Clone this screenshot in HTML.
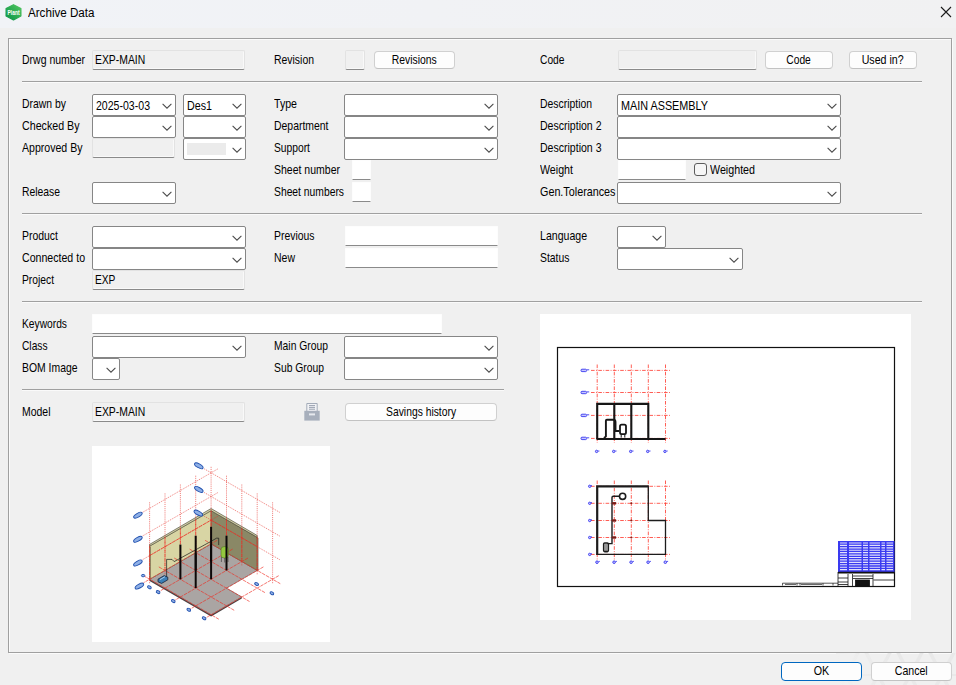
<!DOCTYPE html>
<html><head><meta charset="utf-8"><title>Archive Data</title>
<style>
*{box-sizing:border-box;margin:0;padding:0}
html,body{width:956px;height:685px;overflow:hidden;background:#f0f0f0}
body{position:relative;font-family:"Liberation Sans",sans-serif;font-size:13px;color:#000;line-height:15px}
body>div,body>svg{position:absolute}
#tb{left:0;top:0;width:956px;height:28px;background:linear-gradient(90deg,#f1f3f7,#f1f2f5 45%,#f1f1f2)}
#ttl{left:28px;top:6px;font-size:12px;line-height:15px;white-space:nowrap}
#ttl span{display:inline-block;transform:scaleX(.968);transform-origin:0 50%}
#fr{left:8px;top:38px;width:944px;height:615px;border:1px solid #a0a0a0;box-shadow:inset 1px 1px 0 #fbfbfb,1px 1px 0 #fbfbfb}
.l{white-space:nowrap;height:15px}
.l span,.ct span,.ft span{display:inline-block;transform:scaleX(0.803);transform-origin:0 50%;white-space:nowrap}
.cb{background:#fff;border:1px solid #868686;border-radius:2px}
.cb .ct{position:absolute;left:3px;top:3px;height:15px}
.cb .chev{position:absolute;right:3px;top:8px}
.cb .dis{position:absolute;left:3px;top:4px;right:19px;bottom:4px;background:#ebebeb}
.fd{background:#f0f0f0;border:1px solid #e2e2e2;border-bottom-color:#8a8a8a;border-radius:2px;box-shadow:inset -1px -1px 0 #f9f9f9}
.fd.w{background:#fff;border-radius:1px;border-color:#fdfdfd;border-bottom-color:#8a8a8a;box-shadow:none}
.fd .ft{position:absolute;left:2px;top:1px;height:15px}
.bt{background:#fdfdfd;border:1px solid #d0d0d0;border-bottom-color:#c2c2c2;border-radius:4px;text-align:center;white-space:nowrap;line-height:16px}
.bt span{display:inline-block;transform:scaleX(0.803);transform-origin:50% 50%}
.bt.def{border:1.5px solid #0067c0;line-height:15px}
.sp{height:2px;border-top:1px solid #a0a0a0;border-bottom:1px solid #fafafa}
.ck{width:13px;height:13px;border:1px solid #5c5c5c;border-radius:3px;background:#f6f6f6}
.pv{background:#fff;overflow:hidden}
.pv svg{position:absolute;left:0;top:0}
</style></head>
<body>
<div id="tb"></div>
<svg id="ico" width="19" height="19" viewBox="0 0 18 18" style="left:4.1px;top:2.8px">
<defs><linearGradient id="g" x1="1" y1="0" x2="0" y2="1"><stop offset="0" stop-color="#52c660"/><stop offset="1" stop-color="#0a9346"/></linearGradient></defs>
<path d="M9 1.6 L16 5.3 L16 12.3 L9 16 L2 12.3 L2 5.3 Z" fill="url(#g)" stroke="url(#g)" stroke-width="1.2" stroke-linejoin="round"/>
<text transform="translate(9.1 11.3) scale(1 1.4)" x="0" y="0" font-family="Liberation Sans, sans-serif" font-weight="bold" font-size="4.7" fill="#fff" text-anchor="middle">Plant</text></svg>
<div id="ttl"><span>Archive Data</span></div>
<svg id="cls" width="12" height="12" viewBox="0 0 12 12" style="left:940px;top:6px"><path d="M1 1 L11 11 M11 1 L1 11" stroke="#1a1a1a" stroke-width="1.1" fill="none"/></svg>
<div id="fr"></div>
<div class="l " style="left:22px;top:52.0px"><span style="transform:scaleX(0.807)">Drwg number</span></div>
<div class="fd" style="left:92px;top:50px;width:153px;height:20px"><span class="ft"><span style="transform:scaleX(0.800)">EXP-MAIN</span></span></div>
<div class="l " style="left:274px;top:52.0px"><span style="transform:scaleX(0.802)">Revision</span></div>
<div class="fd" style="left:345px;top:50px;width:20px;height:20px"></div>
<div class="bt " style="left:374px;top:51px;width:81px;height:18px"><span style="transform:scaleX(0.798)">Revisions</span></div>
<div class="l " style="left:540px;top:52.0px"><span style="transform:scaleX(0.788)">Code</span></div>
<div class="fd" style="left:618px;top:50px;width:139px;height:20px"></div>
<div class="bt " style="left:765px;top:51px;width:68px;height:18px"><span style="transform:scaleX(0.788)">Code</span></div>
<div class="bt " style="left:849px;top:51px;width:68px;height:18px"><span style="transform:scaleX(0.819)">Used in?</span></div>
<div class="sp" style="left:22px;top:81px;width:900px"></div>
<div class="l " style="left:22px;top:95.6px"><span style="transform:scaleX(0.801)">Drawn by</span></div>
<div class="cb" style="left:92px;top:94px;width:84px;height:22px"><span class="ct"><span style="transform:scaleX(0.812)">2025-03-03</span></span><svg class="chev" width="10" height="6" viewBox="0 0 10 6"><path d="M0.6 0.8 L5 5.2 L9.4 0.8" fill="none" stroke="#4a4a4a" stroke-width="1.05"/></svg></div>
<div class="cb" style="left:183px;top:94px;width:63px;height:22px"><span class="ct"><span style="transform:scaleX(0.823)">Des1</span></span><svg class="chev" width="10" height="6" viewBox="0 0 10 6"><path d="M0.6 0.8 L5 5.2 L9.4 0.8" fill="none" stroke="#4a4a4a" stroke-width="1.05"/></svg></div>
<div class="l " style="left:22px;top:117.6px"><span style="transform:scaleX(0.820)">Checked By</span></div>
<div class="cb" style="left:92px;top:116px;width:84px;height:22px"><svg class="chev" width="10" height="6" viewBox="0 0 10 6"><path d="M0.6 0.8 L5 5.2 L9.4 0.8" fill="none" stroke="#4a4a4a" stroke-width="1.05"/></svg></div>
<div class="cb" style="left:183px;top:116px;width:63px;height:22px"><svg class="chev" width="10" height="6" viewBox="0 0 10 6"><path d="M0.6 0.8 L5 5.2 L9.4 0.8" fill="none" stroke="#4a4a4a" stroke-width="1.05"/></svg></div>
<div class="l " style="left:22px;top:139.6px"><span style="transform:scaleX(0.813)">Approved By</span></div>
<div class="fd" style="left:92px;top:138px;width:83px;height:20px"></div>
<div class="cb" style="left:183px;top:138px;width:63px;height:22px"><i class="dis"></i><svg class="chev" width="10" height="6" viewBox="0 0 10 6"><path d="M0.6 0.8 L5 5.2 L9.4 0.8" fill="none" stroke="#4a4a4a" stroke-width="1.05"/></svg></div>
<div class="l " style="left:22px;top:183.6px"><span style="transform:scaleX(0.797)">Release</span></div>
<div class="cb" style="left:92px;top:182px;width:84px;height:22px"><svg class="chev" width="10" height="6" viewBox="0 0 10 6"><path d="M0.6 0.8 L5 5.2 L9.4 0.8" fill="none" stroke="#4a4a4a" stroke-width="1.05"/></svg></div>
<div class="l " style="left:274px;top:95.6px"><span style="transform:scaleX(0.816)">Type</span></div>
<div class="cb" style="left:344px;top:94px;width:154px;height:22px"><svg class="chev" width="10" height="6" viewBox="0 0 10 6"><path d="M0.6 0.8 L5 5.2 L9.4 0.8" fill="none" stroke="#4a4a4a" stroke-width="1.05"/></svg></div>
<div class="l " style="left:274px;top:117.6px"><span style="transform:scaleX(0.802)">Department</span></div>
<div class="cb" style="left:344px;top:116px;width:154px;height:22px"><svg class="chev" width="10" height="6" viewBox="0 0 10 6"><path d="M0.6 0.8 L5 5.2 L9.4 0.8" fill="none" stroke="#4a4a4a" stroke-width="1.05"/></svg></div>
<div class="l " style="left:274px;top:139.6px"><span style="transform:scaleX(0.790)">Support</span></div>
<div class="cb" style="left:344px;top:138px;width:154px;height:22px"><svg class="chev" width="10" height="6" viewBox="0 0 10 6"><path d="M0.6 0.8 L5 5.2 L9.4 0.8" fill="none" stroke="#4a4a4a" stroke-width="1.05"/></svg></div>
<div class="l " style="left:274px;top:161.6px"><span style="transform:scaleX(0.808)">Sheet number</span></div>
<div class="fd w" style="left:352px;top:160px;width:19px;height:20px"></div>
<div class="l " style="left:274px;top:183.6px"><span style="transform:scaleX(0.794)">Sheet numbers</span></div>
<div class="fd w" style="left:352px;top:182px;width:19px;height:20px"></div>
<div class="l " style="left:540px;top:95.6px"><span style="transform:scaleX(0.800)">Description</span></div>
<div class="cb" style="left:617px;top:94px;width:224px;height:22px"><span class="ct"><span style="transform:scaleX(0.832)">MAIN ASSEMBLY</span></span><svg class="chev" width="10" height="6" viewBox="0 0 10 6"><path d="M0.6 0.8 L5 5.2 L9.4 0.8" fill="none" stroke="#4a4a4a" stroke-width="1.05"/></svg></div>
<div class="l " style="left:540px;top:117.6px"><span style="transform:scaleX(0.811)">Description 2</span></div>
<div class="cb" style="left:617px;top:116px;width:224px;height:22px"><svg class="chev" width="10" height="6" viewBox="0 0 10 6"><path d="M0.6 0.8 L5 5.2 L9.4 0.8" fill="none" stroke="#4a4a4a" stroke-width="1.05"/></svg></div>
<div class="l " style="left:540px;top:139.6px"><span style="transform:scaleX(0.811)">Description 3</span></div>
<div class="cb" style="left:617px;top:138px;width:224px;height:22px"><svg class="chev" width="10" height="6" viewBox="0 0 10 6"><path d="M0.6 0.8 L5 5.2 L9.4 0.8" fill="none" stroke="#4a4a4a" stroke-width="1.05"/></svg></div>
<div class="l " style="left:540px;top:161.6px"><span style="transform:scaleX(0.820)">Weight</span></div>
<div class="fd w" style="left:618px;top:160px;width:68px;height:20px"></div>
<div class="ck" style="left:694px;top:163px"></div>
<div class="l " style="left:710px;top:161.6px"><span style="transform:scaleX(0.823)">Weighted</span></div>
<div class="l " style="left:540px;top:183.6px"><span style="transform:scaleX(0.829)">Gen.Tolerances</span></div>
<div class="cb" style="left:617px;top:182px;width:224px;height:22px"><svg class="chev" width="10" height="6" viewBox="0 0 10 6"><path d="M0.6 0.8 L5 5.2 L9.4 0.8" fill="none" stroke="#4a4a4a" stroke-width="1.05"/></svg></div>
<div class="sp" style="left:22px;top:213px;width:900px"></div>
<div class="l " style="left:22px;top:227.6px"><span style="transform:scaleX(0.803)">Product</span></div>
<div class="cb" style="left:92px;top:226px;width:154px;height:22px"><svg class="chev" width="10" height="6" viewBox="0 0 10 6"><path d="M0.6 0.8 L5 5.2 L9.4 0.8" fill="none" stroke="#4a4a4a" stroke-width="1.05"/></svg></div>
<div class="l " style="left:22px;top:249.6px"><span style="transform:scaleX(0.815)">Connected to</span></div>
<div class="cb" style="left:92px;top:248px;width:154px;height:22px"><svg class="chev" width="10" height="6" viewBox="0 0 10 6"><path d="M0.6 0.8 L5 5.2 L9.4 0.8" fill="none" stroke="#4a4a4a" stroke-width="1.05"/></svg></div>
<div class="l " style="left:22px;top:271.6px"><span style="transform:scaleX(0.791)">Project</span></div>
<div class="fd" style="left:92px;top:270px;width:153px;height:20px"><span class="ft"><span style="transform:scaleX(0.785)">EXP</span></span></div>
<div class="l " style="left:274px;top:227.6px"><span style="transform:scaleX(0.801)">Previous</span></div>
<div class="fd w" style="left:345px;top:226px;width:153px;height:20px"></div>
<div class="l " style="left:274px;top:249.6px"><span style="transform:scaleX(0.807)">New</span></div>
<div class="fd w" style="left:345px;top:248px;width:153px;height:20px"></div>
<div class="l " style="left:540px;top:227.6px"><span style="transform:scaleX(0.813)">Language</span></div>
<div class="cb" style="left:617px;top:226px;width:49px;height:22px"><svg class="chev" width="10" height="6" viewBox="0 0 10 6"><path d="M0.6 0.8 L5 5.2 L9.4 0.8" fill="none" stroke="#4a4a4a" stroke-width="1.05"/></svg></div>
<div class="l " style="left:540px;top:249.6px"><span style="transform:scaleX(0.800)">Status</span></div>
<div class="cb" style="left:617px;top:248px;width:126px;height:22px"><svg class="chev" width="10" height="6" viewBox="0 0 10 6"><path d="M0.6 0.8 L5 5.2 L9.4 0.8" fill="none" stroke="#4a4a4a" stroke-width="1.05"/></svg></div>
<div class="sp" style="left:22px;top:301px;width:900px"></div>
<div class="l " style="left:22px;top:315.6px"><span style="transform:scaleX(0.788)">Keywords</span></div>
<div class="fd w" style="left:92px;top:314px;width:350px;height:20px"></div>
<div class="l " style="left:22px;top:337.6px"><span style="transform:scaleX(0.785)">Class</span></div>
<div class="cb" style="left:92px;top:336px;width:154px;height:22px"><svg class="chev" width="10" height="6" viewBox="0 0 10 6"><path d="M0.6 0.8 L5 5.2 L9.4 0.8" fill="none" stroke="#4a4a4a" stroke-width="1.05"/></svg></div>
<div class="l " style="left:22px;top:359.6px"><span style="transform:scaleX(0.800)">BOM Image</span></div>
<div class="cb" style="left:92px;top:358px;width:28px;height:22px"><svg class="chev" width="10" height="6" viewBox="0 0 10 6"><path d="M0.6 0.8 L5 5.2 L9.4 0.8" fill="none" stroke="#4a4a4a" stroke-width="1.05"/></svg></div>
<div class="l " style="left:274px;top:337.6px"><span style="transform:scaleX(0.795)">Main Group</span></div>
<div class="cb" style="left:344px;top:336px;width:154px;height:22px"><svg class="chev" width="10" height="6" viewBox="0 0 10 6"><path d="M0.6 0.8 L5 5.2 L9.4 0.8" fill="none" stroke="#4a4a4a" stroke-width="1.05"/></svg></div>
<div class="l " style="left:274px;top:359.6px"><span style="transform:scaleX(0.795)">Sub Group</span></div>
<div class="cb" style="left:344px;top:358px;width:154px;height:22px"><svg class="chev" width="10" height="6" viewBox="0 0 10 6"><path d="M0.6 0.8 L5 5.2 L9.4 0.8" fill="none" stroke="#4a4a4a" stroke-width="1.05"/></svg></div>
<div class="sp" style="left:22px;top:389px;width:482px"></div>
<div class="l " style="left:22px;top:403.6px"><span style="transform:scaleX(0.805)">Model</span></div>
<div class="fd" style="left:92px;top:402px;width:153px;height:20px"><span class="ft"><span style="transform:scaleX(0.800)">EXP-MAIN</span></span></div>
<svg id="prn" width="16" height="18" viewBox="0 0 16 18" style="left:304px;top:403px">
<path d="M2.8 0.5 H13.2 V9 H2.8 Z" fill="#f1f2f5" stroke="#a3abb8" stroke-width="1"/>
<path d="M5 2.6 H11 M5 4.4 H11 M5 6.2 H11" stroke="#9aa2b0" stroke-width="1"/>
<path d="M0.3 7.8 H15.7 V17.6 H0.3 Z" fill="#a7afbc"/>
<rect x="5" y="10.4" width="6" height="2" fill="#e6e9ee"/></svg>
<div class="bt " style="left:345px;top:403px;width:152px;height:18px"><span style="transform:scaleX(0.794)">Savings history</span></div>
<div class="pv" style="left:92px;top:446px;width:238px;height:196px">
<svg width="238" height="196" viewBox="92 446 238 196">
<polygon points="149.6,579.3 211.1,614.8 241.8,597.0 241.8,598.6 211.1,616.4 149.6,580.9" fill="#4a4444"/>
<polygon points="211.1,543.8 257.2,570.4 226.5,588.1 241.8,597.0 211.1,614.8 149.6,579.3" fill="#aaa5a3" stroke="#5a5454" stroke-width="0.5"/>
<polygon points="211.1,543.8 149.6,579.3 149.6,546.2 211.1,510.7" fill="#d8d5a4" stroke="#6a684c" stroke-width="0.5"/>
<polygon points="211.1,543.8 257.2,570.4 257.2,537.3 211.1,510.7" fill="#8a8866" stroke="#55543c" stroke-width="0.5"/>
<polygon points="149.6,546.2 211.1,510.7 257.2,537.3 257.2,535.5 211.1,508.5 149.6,544.4" fill="#d2d0a8" stroke="#3a3928" stroke-width="0.6"/>
<polygon points="257.2,570.4 257.2,537.3 258.4,538.0 258.4,571.1" fill="#6d6b50"/>
<polygon points="149.6,579.3 149.6,546.2 150.8,546.9 150.8,580.0" fill="#7d7b5c"/>
<g stroke="#e8302a" stroke-width="0.7" fill="none" stroke-dasharray="1.1 1" opacity="0.85">
<path d="M211.1 466.8 V547.8"/>
<path d="M195.7 475.7 V556.7"/>
<path d="M180.4 484.5 V565.5"/>
<path d="M165.0 493.4 V574.4"/>
<path d="M149.6 502.3 V583.3"/>
<path d="M226.5 475.7 V556.7"/>
<path d="M241.8 484.5 V565.5"/>
<path d="M257.2 493.4 V574.4"/>
<path d="M272.6 502.3 V583.3"/>
<path d="M142.7 559.6 L218.0 516.1"/>
<path d="M204.2 516.1 L280.3 560.0"/>
<path d="M142.7 535.9 L218.0 492.5"/>
<path d="M204.2 492.5 L280.3 536.4"/>
<path d="M142.7 512.3 L218.0 468.8"/>
<path d="M204.2 468.8 L280.3 512.7"/>
</g>
<g stroke="#f02a20" stroke-width="0.7" fill="none" opacity="0.9" stroke-dasharray="3.5 0.9">
<path d="M217.2 540.3 L143.5 582.8"/>
<path d="M232.6 549.1 L158.8 591.7"/>
<path d="M248.0 558.0 L174.2 600.6"/>
<path d="M263.4 566.9 L189.6 609.4"/>
<path d="M278.7 575.7 L205.0 618.3"/>
<path d="M205.0 540.3 L280.3 583.7"/>
<path d="M189.6 549.1 L264.9 592.6"/>
<path d="M174.2 558.0 L249.5 601.5"/>
<path d="M158.8 566.9 L234.2 610.3"/>
<path d="M143.5 575.7 L218.8 619.2"/>
<path d="M149.6 555.6 L211.1 520.1 L257.2 546.7"/>
<path d="M211.1 543.8 V510.7"/>
<path d="M195.7 552.7 V519.6"/>
<path d="M180.4 561.5 V528.4"/>
<path d="M165.0 570.4 V537.3"/>
<path d="M149.6 579.3 V546.2"/>
<path d="M226.5 552.7 V519.6"/>
<path d="M241.8 561.5 V528.4"/>
<path d="M257.2 570.4 V537.3"/>
</g>
<g stroke="#1a1a1a" stroke-width="0.7" fill="none">
<path d="M166.6 577 V559.4 H172 L174.2 561.6 L210 541.9 L216.5 538.2 H218.7 V545"/>
</g>
<path d="M158 579.2 l6.2 -3.6 l3.6 1.6 v2.6 l-6.2 3.6 l-3.6 -1.6z" fill="#3b7fb6" stroke="#16233a" stroke-width="0.8"/>
<path d="M160 579.6 l5 -2.9" stroke="#bfe0ff" stroke-width="0.8"/>
<rect x="221" y="546.6" width="7.4" height="11.4" rx="3" fill="#93c83f" stroke="#46651f" stroke-width="0.5"/>
<path d="M221.4 557 v5 M228 557 v5 M224.7 558 v4.5" stroke="#333" stroke-width="0.6"/>
<g stroke="#0c0808" stroke-width="2">
<path d="M211.1 561.5 V526.8"/>
<path d="M195.7 570.4 V535.7"/>
<path d="M180.4 579.3 V544.6"/>
<path d="M226.5 570.4 V535.7"/>
<path d="M211.1 579.3 V544.6"/>
<path d="M195.7 588.1 V553.4"/>
</g>
<ellipse cx="137.9" cy="515.2" rx="4.8" ry="1.9" transform="rotate(-30 137.9 515.2)" fill="#8fb0e6" stroke="#1f4fae" stroke-width="0.9"/>
<ellipse cx="137.9" cy="539.3" rx="4.8" ry="1.9" transform="rotate(-30 137.9 539.3)" fill="#8fb0e6" stroke="#1f4fae" stroke-width="0.9"/>
<ellipse cx="137.9" cy="563.0" rx="4.8" ry="1.9" transform="rotate(-30 137.9 563.0)" fill="#8fb0e6" stroke="#1f4fae" stroke-width="0.9"/>
<ellipse cx="139.4" cy="586.1" rx="4.8" ry="1.9" transform="rotate(-30 139.4 586.1)" fill="#8fb0e6" stroke="#1f4fae" stroke-width="0.9"/>
<ellipse cx="198.8" cy="465.8" rx="4.8" ry="1.9" transform="rotate(30 198.8 465.8)" fill="#8fb0e6" stroke="#1f4fae" stroke-width="0.9"/>
<ellipse cx="198.8" cy="489.4" rx="4.8" ry="1.9" transform="rotate(30 198.8 489.4)" fill="#8fb0e6" stroke="#1f4fae" stroke-width="0.9"/>
<ellipse cx="198.3" cy="513.1" rx="4.8" ry="1.9" transform="rotate(30 198.3 513.1)" fill="#8fb0e6" stroke="#1f4fae" stroke-width="0.9"/>
<ellipse cx="149.4" cy="587.2" rx="2.0" ry="1.3" transform="rotate(30 149.4 587.2)" fill="#8fb0e6" stroke="#1f4fae" stroke-width="0.9"/>
<ellipse cx="158.1" cy="592.1" rx="2.0" ry="1.3" transform="rotate(30 158.1 592.1)" fill="#8fb0e6" stroke="#1f4fae" stroke-width="0.9"/>
<ellipse cx="173.3" cy="601.1" rx="2.0" ry="1.3" transform="rotate(30 173.3 601.1)" fill="#8fb0e6" stroke="#1f4fae" stroke-width="0.9"/>
<ellipse cx="188.8" cy="609.7" rx="2.0" ry="1.3" transform="rotate(30 188.8 609.7)" fill="#8fb0e6" stroke="#1f4fae" stroke-width="0.9"/>
<ellipse cx="204.1" cy="618.2" rx="2.0" ry="1.3" transform="rotate(30 204.1 618.2)" fill="#8fb0e6" stroke="#1f4fae" stroke-width="0.9"/>
<ellipse cx="256.6" cy="584.0" rx="2.0" ry="1.3" transform="rotate(30 256.6 584.0)" fill="#8fb0e6" stroke="#1f4fae" stroke-width="0.9"/>
<ellipse cx="271.9" cy="593.2" rx="2.0" ry="1.3" transform="rotate(30 271.9 593.2)" fill="#8fb0e6" stroke="#1f4fae" stroke-width="0.9"/>
<ellipse cx="143.1" cy="575.6" rx="1.7" ry="1.2" transform="rotate(0 143.1 575.6)" fill="#8fb0e6" stroke="#1f4fae" stroke-width="0.9"/>
</svg>
</div>
<div class="pv" style="left:540px;top:314px;width:371px;height:306px">
<svg width="371" height="306" viewBox="0 0 371 306">
<rect x="17.5" y="33.5" width="337" height="239" fill="none" stroke="#111" stroke-width="1.2"/>
<g stroke="#ff4136" stroke-width="0.85" fill="none" stroke-dasharray="3.6 1.4 0.9 1.4">
<path d="M57.2 50.5 V129"/>
<path d="M57.2 166.5 V245.5"/>
<path d="M74.3 50.5 V129"/>
<path d="M74.3 166.5 V245.5"/>
<path d="M91.3 50.5 V129"/>
<path d="M91.3 166.5 V245.5"/>
<path d="M108.3 50.5 V129"/>
<path d="M108.3 166.5 V245.5"/>
<path d="M125.5 50.5 V129"/>
<path d="M125.5 166.5 V245.5"/>
<path d="M51 56.4 H131"/>
<path d="M51 78.5 H131"/>
<path d="M51 101.4 H131"/>
<path d="M51 124.4 H131"/>
<path d="M51 172.3 H131"/>
<path d="M51 189.3 H131"/>
<path d="M51 206.5 H131"/>
<path d="M51 223.5 H131"/>
<path d="M51 240.4 H131"/>
</g>
<g stroke="#161616" fill="none">
<path d="M57.2 124.9 V89.9 H108.3 V124.9" stroke-width="2.1"/>
<path d="M56.5 125 H125.5" stroke-width="2.1"/>
<path d="M74.3 90 V125 M91.3 90 V125" stroke-width="2.1"/>
<path d="M64 124 l1.9 -1.6 V106.8 q0 -1 1 -1 H73.2 q2.3 0 2.3 2.2 V117 h3.6" stroke-width="1.9"/>
<rect x="80" y="110.6" width="6" height="9.6" rx="1.6" stroke-width="1.8"/>
<path d="M81.2 120 v3.6 M84.8 120 v3.6" stroke-width="1"/>
</g>
<g stroke="#1c1c1c" fill="none" stroke-linejoin="miter">
<path d="M108.3 172.3 V206.5 H125.5 V240.4 H57.2" stroke-width="1.3"/>
<path d="M57.2 240.9 V172.3 H108.8" stroke-width="2.2"/>
<circle cx="82.6" cy="182.3" r="3.1" stroke-width="1.6"/>
<path d="M79.4 182.3 H73.2 q-1.2 0 -1.2 1.2 V229.6 H67.5" stroke-width="1.4"/>
<rect x="63.7" y="229" width="4.6" height="8.6" rx="1" stroke-width="1.6"/><path d="M66 229.5 v7.6" stroke-width="0.9"/>
</g>
<rect x="72.1" y="188.10000000000002" width="4" height="2.4" fill="#7a1d18"/>
<rect x="72.1" y="205.3" width="4" height="2.4" fill="#7a1d18"/>
<rect x="72.1" y="222.3" width="4" height="2.4" fill="#7a1d18"/>
<circle cx="91.3" cy="189.3" r="1" fill="#8a2018"/>
<circle cx="91.3" cy="206.5" r="1" fill="#8a2018"/>
<circle cx="91.3" cy="223.5" r="1" fill="#8a2018"/>
<g fill="#c8c8ff" stroke="#2222ee" stroke-width="0.8">
<rect x="41" y="55.199999999999996" width="5.6" height="2.4" rx="1"/>
<path d="M47 55.8 h2.2"/>
<rect x="41" y="77.3" width="5.6" height="2.4" rx="1"/>
<path d="M47 77.9 h2.2"/>
<rect x="41" y="100.2" width="5.6" height="2.4" rx="1"/>
<path d="M47 100.80000000000001 h2.2"/>
<rect x="41" y="123.2" width="5.6" height="2.4" rx="1"/>
<path d="M47 123.80000000000001 h2.2"/>
<circle cx="56.6" cy="137.4" r="1.2"/>
<path d="M58.1 137 h1.3"/>
<circle cx="57.0" cy="248.2" r="1.3"/>
<path d="M58.5 247.4 h1.3"/>
<circle cx="73.7" cy="137.4" r="1.2"/>
<path d="M75.2 137 h1.3"/>
<circle cx="74.1" cy="248.2" r="1.3"/>
<path d="M75.6 247.4 h1.3"/>
<circle cx="90.7" cy="137.4" r="1.2"/>
<path d="M92.2 137 h1.3"/>
<circle cx="91.1" cy="248.2" r="1.3"/>
<path d="M92.6 247.4 h1.3"/>
<circle cx="107.7" cy="137.4" r="1.2"/>
<path d="M109.2 137 h1.3"/>
<circle cx="108.1" cy="248.2" r="1.3"/>
<path d="M109.6 247.4 h1.3"/>
<circle cx="124.9" cy="137.4" r="1.2"/>
<path d="M126.4 137 h1.3"/>
<circle cx="125.3" cy="248.2" r="1.3"/>
<path d="M126.8 247.4 h1.3"/>
<circle cx="49.7" cy="172.3" r="1.2"/>
<path d="M51 171.70000000000002 h1"/>
<circle cx="49.7" cy="189.3" r="1.2"/>
<path d="M51 188.70000000000002 h1"/>
<circle cx="49.7" cy="206.5" r="1.2"/>
<path d="M51 205.9 h1"/>
<circle cx="49.7" cy="223.5" r="1.2"/>
<path d="M51 222.9 h1"/>
<circle cx="49.7" cy="240.4" r="1.2"/>
<path d="M51 239.8 h1"/>
</g>
<rect x="298" y="227" width="56.5" height="31.5" fill="#3a3af0"/>
<g stroke="#fff" stroke-width="1.15" opacity=".85">
<path d="M300 229.00 H307 M309 229.00 H321.5 M323 229.00 H328 M329.5 229.00 H340 M341.5 229.00 H345 M346.5 229.00 H353"/>
<path d="M300 231.42 H307 M309 231.42 H321.5 M323 231.42 H328 M329.5 231.42 H340 M341.5 231.42 H345 M346.5 231.42 H353"/>
<path d="M300 233.84 H307 M309 233.84 H321.5 M323 233.84 H328 M329.5 233.84 H340 M341.5 233.84 H345 M346.5 233.84 H353"/>
<path d="M300 236.26 H307 M309 236.26 H321.5 M323 236.26 H328 M329.5 236.26 H340 M341.5 236.26 H345 M346.5 236.26 H353"/>
<path d="M300 238.68 H307 M309 238.68 H321.5 M323 238.68 H328 M329.5 238.68 H340 M341.5 238.68 H345 M346.5 238.68 H353"/>
<path d="M300 241.10 H307 M309 241.10 H321.5 M323 241.10 H328 M329.5 241.10 H340 M341.5 241.10 H345 M346.5 241.10 H353"/>
<path d="M300 243.52 H307 M309 243.52 H321.5 M323 243.52 H328 M329.5 243.52 H340 M341.5 243.52 H345 M346.5 243.52 H353"/>
<path d="M300 245.94 H307 M309 245.94 H321.5 M323 245.94 H328 M329.5 245.94 H340 M341.5 245.94 H345 M346.5 245.94 H353"/>
<path d="M300 248.36 H307 M309 248.36 H321.5 M323 248.36 H328 M329.5 248.36 H340 M341.5 248.36 H345 M346.5 248.36 H353"/>
<path d="M300 250.78 H307 M309 250.78 H321.5 M323 250.78 H328 M329.5 250.78 H340 M341.5 250.78 H345 M346.5 250.78 H353"/>
<path d="M300 253.20 H307 M309 253.20 H321.5 M323 253.20 H328 M329.5 253.20 H340 M341.5 253.20 H345 M346.5 253.20 H353"/>
<path d="M300 255.62 H307 M309 255.62 H321.5 M323 255.62 H328 M329.5 255.62 H340 M341.5 255.62 H345 M346.5 255.62 H353"/>
</g>
<g stroke="#111" fill="none" stroke-width="0.8">
<path d="M298 258.6 H354.5" stroke-width="1.6"/>
<path d="M298 258 V272.5 M308 260 V272 M312.5 260 V272 M333 260 V272 M298 264 H308 M298 268 H308 M313 262 H333 M313 264.5 H333 M333.5 266 H354 M298 270.5 H308"/>
<rect x="315.5" y="266" width="14" height="6" fill="#111"/>
<path d="M242.5 271.5 V269.2 H298 M257 269.2 v2.3 M260 269.2 v2.3 M283 269.2 v2.3 M293 269.2 v2.3 M245 270.4 H256 M261 270.4 H282" stroke-width="0.7"/>
</g>
</svg>
</div>
<svg id="bgp" width="120" height="34" viewBox="0 0 120 34" style="left:836px;top:653px">
<defs><linearGradient id="fd" x1="0" y1="0" x2="1" y2="0"><stop offset="0" stop-color="#f0f0f0" stop-opacity="1"/><stop offset=".45" stop-color="#f0f0f0" stop-opacity="0"/></linearGradient></defs>
<g fill="none" stroke="#e9e9e9" stroke-width="3.5"><path d="M-6 -8 L10 22 L26 -8 L42 22 L58 -8 L74 22 L90 -8 L106 22 L122 -8"/><path d="M-6 52 L10 22 L26 52 M26 52 L42 22 L58 52 L74 22 L90 52 L106 22 L122 52"/><path d="M0 22 H120" stroke-width="2"/></g>
<rect width="120" height="34" fill="url(#fd)"/></svg>
<div class="bt def" style="left:781px;top:662px;width:81px;height:19px"><span style="transform:scaleX(0.825)">OK</span></div>
<div class="bt " style="left:871px;top:662px;width:81px;height:19px"><span style="transform:scaleX(0.815)">Cancel</span></div>
</body></html>
